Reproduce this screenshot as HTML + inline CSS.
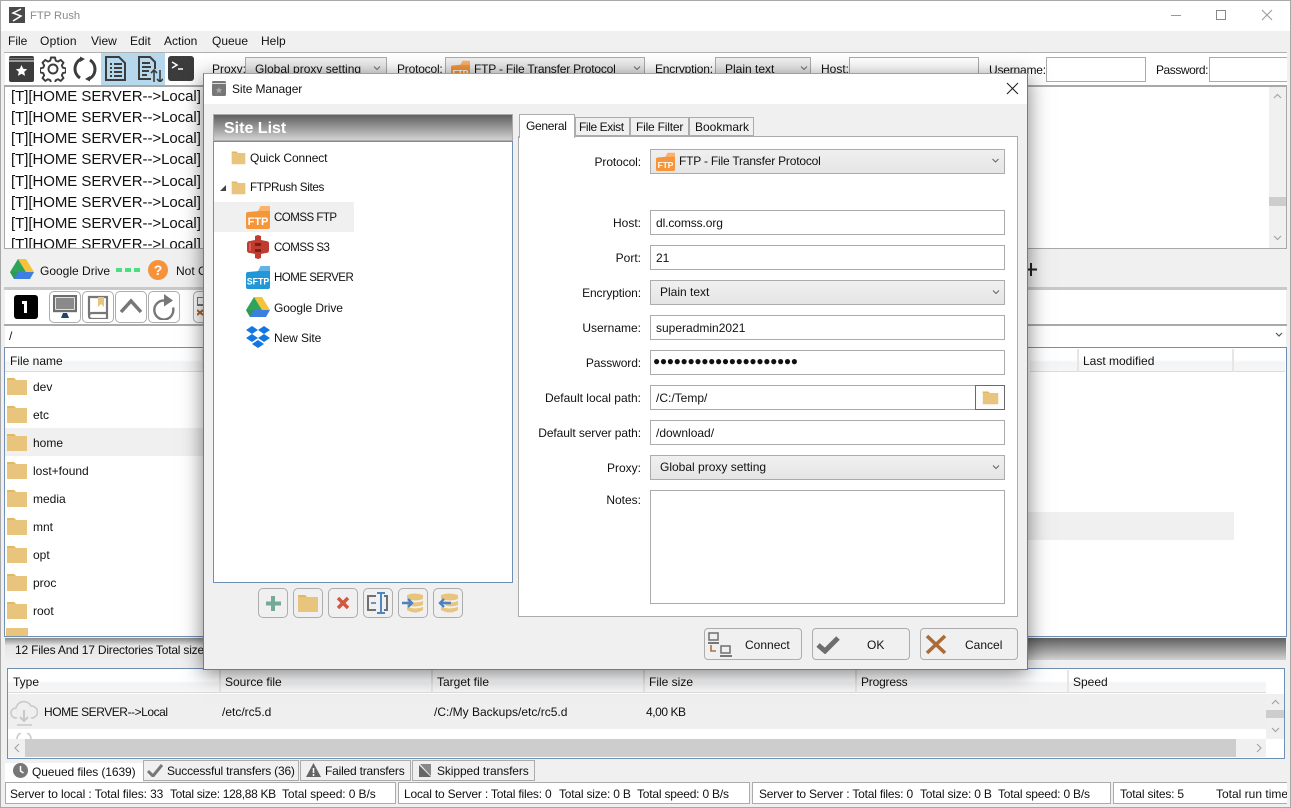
<!DOCTYPE html>
<html><head><meta charset="utf-8"><title>FTP Rush</title>
<style>
html,body{margin:0;padding:0;background:#fff}
#w{position:relative;width:1291px;height:808px;overflow:hidden;background:#f0f0f0;font:12px/16px "Liberation Sans",sans-serif;color:#111}
#w div,#w span.t,#w svg{position:absolute}
.t{white-space:nowrap}
.c0{letter-spacing:-.1px}.c1{letter-spacing:-.2px}.c2{letter-spacing:-.45px}.c3{letter-spacing:-.5px;font-size:11.5px}
.b{box-sizing:border-box;border:1px solid #ababab;background:#fff}
.r{text-align:right;width:140px;left:501px}
.dd{box-sizing:border-box;border:1px solid #acacac;background:linear-gradient(#f0f0f0,#e5e5e5)}
.ib{box-sizing:border-box;border:1px solid #adadad;border-radius:5px;width:30px;height:30px}
.btn{box-sizing:border-box;border:1px solid #adadad;border-radius:4px;width:98px;height:32px;top:628px;background:#f0f0f0}
.tab{box-sizing:border-box;border:1px solid #acacac;background:#f0f0f0;height:19px;top:117px}
.log{left:11px;font-size:15px;letter-spacing:-.05px;line-height:21px}
.hs{height:23px;background:linear-gradient(#fff 50%,#f2f4f6 60%,#f5f6f8);border-right:2px solid #e6e6e6;border-bottom:1px solid #dcdcdc;box-sizing:border-box}
</style></head><body>
<div id="w">
<svg width="0" height="0" style="left:0;top:0">
<defs>
<symbol id="folder" viewBox="0 0 22 20"><path d="M1 2h7l2 2h11v15H1z" fill="#e8c47c"/><path d="M1 2h7l2 2H1z" fill="#e0b860"/></symbol>
<symbol id="ftp" viewBox="0 0 24 24"><path d="M12 6l2-4a1 1 0 0 1 1-1h9v8H12z" fill="#fbb26b"/><path d="M0 9a2 2 0 0 1 2-2l11-1h11v16a2 2 0 0 1-2 2H2a2 2 0 0 1-2-2z" fill="#f6963a"/></symbol>
<symbol id="gd" viewBox="0 0 24 22"><path d="M8 1h8l8 13h-8z" fill="#f5c33b"/><path d="M8 1l8 13-4 7-0 0L0 14z" fill="#2fa35a"/><path d="M0 14h24l-4 7H4z" fill="#3d7fe0"/><path d="M8 14L4 21 0 14z" fill="#2b9a55"/></symbol>
</defs>
</svg>

<!-- window frame / title -->
<div style="left:0;top:0;width:1291px;height:31px;background:#fff"></div>
<div style="left:0;top:0;width:1291px;height:1px;background:#a8a8a8"></div>
<div style="left:0;top:0;width:1px;height:808px;background:#a8a8a8"></div>
<div style="left:1290px;top:0;width:1px;height:808px;background:#a8a8a8"></div>
<div style="left:0;top:807px;width:1291px;height:1px;background:#a8a8a8"></div>
<svg style="left:9px;top:7px" width="16" height="16" viewBox="0 0 16 16"><rect width="16" height="16" fill="#4a4a4a"/><path d="M12 2L4 6l8 3-8 5" fill="none" stroke="#fff" stroke-width="1.500"/></svg>
<span class="t" style="left:30px;top:8px;color:#8a8a8a;font-size:11.2px">FTP Rush</span>
<svg style="left:1170px;top:8px" width="110" height="15" viewBox="0 0 110 15"><path d="M1 7.500h10" stroke="#999" fill="none"/><rect x="46.500" y="2.500" width="9" height="9" fill="none" stroke="#888"/><path d="M92 2l10 10M102 2L92 12" stroke="#999" fill="none"/></svg>

<!-- menu -->
<span class="t" style="left:8px;top:33px">File</span>
<span class="t" style="left:40px;top:33px;letter-spacing:.25px">Option</span>
<span class="t" style="left:91px;top:33px">View</span>
<span class="t" style="left:130px;top:33px">Edit</span>
<span class="t" style="left:164px;top:33px">Action</span>
<span class="t" style="left:212px;top:33px">Queue</span>
<span class="t" style="left:261px;top:33px">Help</span>

<!-- toolbar -->
<div style="left:4px;top:52px;width:1283px;height:1px;background:#b0b0b0"></div>
<div style="left:5px;top:53px;width:1282px;height:33px;background:#fff"></div>
<div style="left:101px;top:53px;width:64px;height:32px;background:#b5d8ec"></div>
<svg style="left:9px;top:56px" width="25" height="26" viewBox="0 0 25 26"><path d="M2 0h21a2 2 0 0 1 2 2v22a2 2 0 0 1-2 2H2a2 2 0 0 1-2-2V2a2 2 0 0 1 2-2z" fill="#3c3c3c"/><path d="M0 5h25" stroke="#fff"/><path d="M0 2.500h25" stroke="#777"/><path d="M12.500 9l1.700 3.800 4 .4-3 2.700.9 4-3.600-2.100-3.600 2.100.9-4-3-2.700 4-.4z" fill="#fff"/></svg>
<svg style="left:40px;top:56px" width="26" height="26" viewBox="0 0 26 26"><g fill="none" stroke="#3c3c3c" stroke-width="1.900" stroke-linejoin="round"><path d="M11 1.500h4l.7 3.100 2.300 1 2.700-1.700 2.800 2.800-1.700 2.700 1 2.300 3.100.7v4l-3.100.7-1 2.300 1.700 2.700-2.800 2.800-2.700-1.700-2.300 1-.7 3.100h-4l-.7-3.100-2.300-1-2.700 1.700-2.800-2.800 1.700-2.700-1-2.300-3.100-.7v-4l3.100-.7 1-2.300-1.700-2.700 2.800-2.800 2.700 1.700 2.300-1z"/><circle cx="13" cy="13" r="4.500"/></g></svg>
<svg style="left:72px;top:56px" width="26" height="26" viewBox="0 0 26 26"><g fill="none" stroke="#3c3c3c" stroke-width="3"><path d="M8 22A11 11 0 0 1 9 3"/><path d="M18 4a11 11 0 0 1-1 19"/></g><path d="M8 0.500l5 2.500-5 3zM18 25.500l-5-2.500 5-3z" fill="#3c3c3c"/></svg>
<svg style="left:105px;top:56px" width="21" height="25" viewBox="0 0 21 25"><path d="M1 1h13l6 6v17H1z" fill="none" stroke="#3c3c3c" stroke-width="2"/><path d="M5 8h2M9 8h8M5 12h2M9 12h8M5 16h2M9 16h8M5 20h2M9 20h8" stroke="#3c3c3c" stroke-width="2"/></svg>
<svg style="left:137px;top:56px" width="26" height="26" viewBox="0 0 26 26"><path d="M14 23H2V1h11l5 5v7" fill="none" stroke="#3c3c3c" stroke-width="2"/><path d="M5 7h8M5 11h9M5 15h7M5 19h5" stroke="#3c3c3c" stroke-width="2"/><path d="M17 26V14m-3 3l3-3 3 3M23 14v12m-3-3l3 3 3-3" fill="none" stroke="#3c3c3c" stroke-width="1.600"/></svg>
<svg style="left:168px;top:56px" width="26" height="25" viewBox="0 0 26 25"><rect width="26" height="25" rx="3" fill="#3c3c3c"/><path d="M4 6l5 3-5 3" fill="none" stroke="#fff" stroke-width="1.500"/><path d="M10 13h5" stroke="#fff" stroke-width="1.500"/></svg>
<span class="t" style="left:212px;top:61px">Proxy:</span>
<div class="dd" style="left:245px;top:57px;width:142px;height:24px"></div>
<span class="t" style="left:255px;top:61px">Global proxy setting</span>
<span class="t c1" style="left:397px;top:61px">Protocol:</span>
<div class="dd" style="left:445px;top:57px;width:200px;height:24px"></div>
<svg style="left:451px;top:60px" width="19" height="19" viewBox="0 0 24 24"><use href="#ftp"/><text x="12" y="20" font-family="Liberation Sans" font-size="10.500" font-weight="bold" fill="#fff" text-anchor="middle">FTP</text></svg>
<span class="t c1" style="left:474px;top:61px">FTP - File Transfer Protocol</span>
<span class="t c1" style="left:655px;top:61px">Encryption:</span>
<div class="dd" style="left:715px;top:57px;width:96px;height:24px"></div>
<span class="t" style="left:725px;top:61px">Plain text</span>
<span class="t" style="left:821px;top:61px">Host:</span>
<div class="b" style="left:849px;top:57px;width:130px;height:25px"></div>
<span class="t c1" style="left:989px;top:62px">Username:</span>
<div class="b" style="left:1046px;top:57px;width:100px;height:25px"></div>
<span class="t c2" style="left:1156px;top:62px">Password:</span>
<div class="b" style="left:1209px;top:57px;width:78px;height:25px;border-right:0"></div>

<!-- log -->
<div style="left:4px;top:85px;width:1283px;height:164px;box-sizing:border-box;border:1px solid #a8a8a8;border-top:2px solid #a8a8a8;background:#fff"></div>
<div style="left:1269px;top:87px;width:17px;height:161px;background:#f0f0f0"></div>
<div style="left:1269px;top:197px;width:17px;height:9px;background:#cdcdcd"></div>
<svg style="left:1269px;top:87px" width="17" height="161"><path d="M5 11l3.500-3.500L12 11M5 149l3.500 3.500L12 149" fill="none" stroke="#a6a6a6" stroke-width="1.200"/></svg>
<span class="t log" style="top:86px">[T][HOME SERVER--&gt;Local]</span>
<span class="t log" style="top:107px">[T][HOME SERVER--&gt;Local]</span>
<span class="t log" style="top:128px">[T][HOME SERVER--&gt;Local]</span>
<span class="t log" style="top:149px">[T][HOME SERVER--&gt;Local]</span>
<span class="t log" style="top:171px">[T][HOME SERVER--&gt;Local]</span>
<span class="t log" style="top:192px">[T][HOME SERVER--&gt;Local]</span>
<span class="t log" style="top:213px">[T][HOME SERVER--&gt;Local]</span>
<div style="left:5px;top:234px;width:198px;height:14px;overflow:hidden"><span class="t" style="position:absolute;left:6px;top:0;font-size:15px;letter-spacing:-.05px;line-height:21px">[T][HOME SERVER--&gt;Local]</span></div>

<!-- connection strip -->
<svg style="left:10px;top:258px" width="24" height="22"><use href="#gd"/></svg>
<span class="t" style="left:40px;top:263px">Google Drive</span>
<div style="left:116px;top:268px;width:6px;height:4px;background:#4be07f"></div>
<div style="left:125px;top:268px;width:6px;height:4px;background:#4be07f"></div>
<div style="left:134px;top:268px;width:6px;height:4px;background:#4be07f"></div>
<svg style="left:148px;top:260px" width="20" height="20"><circle cx="10" cy="10" r="10" fill="#f7923a"/><text x="10" y="15" font-family="Liberation Sans" font-size="14" font-weight="bold" fill="#fff" text-anchor="middle">?</text></svg>
<span class="t" style="left:176px;top:263px">Not Connected</span>
<svg style="left:1024px;top:262px" width="14" height="15"><path d="M7 1v13M1 7.500h12" stroke="#222" stroke-width="2"/></svg>

<!-- file panel -->
<div style="left:4px;top:287px;width:1283px;height:3px;background:#c9c9c9"></div>
<div style="left:5px;top:290px;width:1281px;height:34px;background:#fff"></div>
<svg style="left:14px;top:295px" width="24" height="24"><rect width="24" height="24" rx="3" fill="#000"/><path d="M8 6h5v12h-3V9H8z" fill="#fff"/></svg>
<div class="ib" style="left:49px;top:291px;width:32px;height:32px"></div>
<svg style="left:53px;top:295px" width="24" height="24" viewBox="0 0 24 24"><rect x="1" y="1" width="22" height="15" fill="none" stroke="#6e6e6e" stroke-width="2.400"/><rect x="3" y="3" width="18" height="11" fill="#8a8a8a"/><path d="M8 23l2-5h4l2 5z" fill="#23436f"/></svg>
<div class="ib" style="left:82px;top:291px;width:32px;height:32px"></div>
<svg style="left:87px;top:295px" width="22" height="24" viewBox="0 0 22 24"><path d="M2 20V2h18v22H5a3 3 0 0 1-3-3 3 3 0 0 1 3-3h15" fill="none" stroke="#777" stroke-width="2.200"/><path d="M11 2h6v10l-3-3-3 3z" fill="#e8c47c"/></svg>
<div class="ib" style="left:115px;top:291px;width:32px;height:32px"></div>
<svg style="left:119px;top:298px" width="24" height="16"><path d="M2 14L12 3l10 11" fill="none" stroke="#777" stroke-width="3.500"/></svg>
<div class="ib" style="left:148px;top:291px;width:32px;height:32px"></div>
<svg style="left:153px;top:294px" width="23" height="26" viewBox="0 0 23 26"><path d="M11 6.500a9.500 9.500 0 1 0 9 7" fill="none" stroke="#777" stroke-width="2.400"/><path d="M11 0l9 6.500-9 6z" fill="#777"/></svg>
<div class="ib" style="left:193px;top:291px;width:32px;height:32px"></div>
<svg style="left:197px;top:297px" width="8" height="20"><rect x="0" y="0" width="8" height="8" fill="none" stroke="#777" stroke-width="2"/><path d="M0 13l6 5M6 13l-6 5" stroke="#a8642c" stroke-width="2"/></svg>
<div style="left:4px;top:324px;width:1283px;height:2px;background:#aaa"></div>
<div style="left:5px;top:326px;width:1281px;height:21px;background:#fff"></div>
<span class="t" style="left:9px;top:328px">/</span>
<svg style="left:1273px;top:330px" width="12" height="10"><path d="M3 3l3 3 3-3" fill="none" stroke="#555" stroke-width="1.200"/></svg>
<div class="b" style="left:4px;top:347px;width:1283px;height:290px;border-color:#6f8fb5"></div>
<div class="hs" style="left:5px;top:349px;width:199px"></div>
<div class="hs" style="left:1030px;top:349px;width:49px"></div>
<div class="hs" style="left:1079px;top:349px;width:155px"></div>
<div class="hs" style="left:1234px;top:349px;width:51px;border-right:0"></div>
<span class="t" style="left:10px;top:353px">File name</span>
<span class="t" style="left:1083px;top:353px">Last modified</span>
<div style="left:5px;top:428px;width:198px;height:28px;background:#f0f0f0"></div>
<div style="left:1028px;top:512px;width:206px;height:28px;background:#f0f0f0"></div>
<svg style="left:6px;top:376px" width="22" height="20"><use href="#folder"/></svg><span class="t" style="left:33px;top:379px">dev</span>
<svg style="left:6px;top:404px" width="22" height="20"><use href="#folder"/></svg><span class="t" style="left:33px;top:407px">etc</span>
<svg style="left:6px;top:432px" width="22" height="20"><use href="#folder"/></svg><span class="t" style="left:33px;top:435px">home</span>
<svg style="left:6px;top:460px" width="22" height="20"><use href="#folder"/></svg><span class="t" style="left:33px;top:463px">lost+found</span>
<svg style="left:6px;top:488px" width="22" height="20"><use href="#folder"/></svg><span class="t" style="left:33px;top:491px">media</span>
<svg style="left:6px;top:516px" width="22" height="20"><use href="#folder"/></svg><span class="t" style="left:33px;top:519px">mnt</span>
<svg style="left:6px;top:544px" width="22" height="20"><use href="#folder"/></svg><span class="t" style="left:33px;top:547px">opt</span>
<svg style="left:6px;top:572px" width="22" height="20"><use href="#folder"/></svg><span class="t" style="left:33px;top:575px">proc</span>
<svg style="left:6px;top:600px" width="22" height="20"><use href="#folder"/></svg><span class="t" style="left:33px;top:603px">root</span>
<div style="left:6px;top:628px;width:22px;height:8px;background:#e8c47c"></div>
<div style="left:5px;top:638px;width:1281px;height:22px;background:linear-gradient(#5f5f5f,#d2d2d2)"></div>
<div style="left:5px;top:638px;width:199px;height:22px;background:linear-gradient(#8a8a8a,#e6e6e6 35%,#eee)"></div>
<span class="t c1" style="left:15px;top:642px">12 Files And 17 Directories Total size</span>

<!-- queue -->
<div class="b" style="left:7px;top:668px;width:1278px;height:91px;border-color:#6f8fb5"></div>
<div class="hs" style="left:8px;top:670px;width:213px"></div>
<div class="hs" style="left:221px;top:670px;width:212px"></div>
<div class="hs" style="left:433px;top:670px;width:212px"></div>
<div class="hs" style="left:645px;top:670px;width:212px"></div>
<div class="hs" style="left:857px;top:670px;width:212px"></div>
<div class="hs" style="left:1069px;top:670px;width:197px;border-right:0"></div>
<span class="t" style="left:13px;top:674px">Type</span>
<span class="t" style="left:225px;top:674px">Source file</span>
<span class="t" style="left:437px;top:674px">Target file</span>
<span class="t" style="left:649px;top:674px">File size</span>
<span class="t c1" style="left:861px;top:674px">Progress</span>
<span class="t" style="left:1073px;top:674px">Speed</span>
<div style="left:8px;top:694px;width:1258px;height:35px;background:#efefef"></div>
<svg style="left:10px;top:697px" width="28" height="31" viewBox="0 0 28 31"><path d="M7 21H6a5 5 0 0 1 0-10 8 8 0 0 1 15-2 6 6 0 0 1 1 12h-1" fill="none" stroke="#c8c8c8" stroke-width="1.500"/><path d="M14 13v11m-4-4l4 4 4-4" fill="none" stroke="#c8c8c8" stroke-width="2"/><path d="M7 28h15" stroke="#c8c8c8" stroke-width="1.500"/></svg>
<span class="t c2" style="left:44px;top:704px">HOME SERVER--&gt;Local</span>
<span class="t" style="left:222px;top:704px">/etc/rc5.d</span>
<span class="t" style="left:434px;top:704px">/C:/My Backups/etc/rc5.d</span>
<span class="t c2" style="left:646px;top:704px">4,00 KB</span>
<svg style="left:14px;top:733px" width="20" height="6"><path d="M3 6a7 7 0 0 1 14 0" fill="none" stroke="#c8c8c8" stroke-width="1.500"/></svg>
<div style="left:8px;top:739px;width:1258px;height:18px;background:#f0f0f0"></div>
<div style="left:25px;top:739px;width:1211px;height:18px;background:#cdcdcd"></div>
<svg style="left:8px;top:739px" width="1258" height="18"><path d="M11 5L7 9l4 4M1249 5l4 4-4 4" fill="none" stroke="#a6a6a6" stroke-width="1.200"/></svg>
<div style="left:1266px;top:694px;width:18px;height:45px;background:#f0f0f0"></div>
<div style="left:1266px;top:710px;width:18px;height:8px;background:#cdcdcd"></div>
<svg style="left:1266px;top:694px" width="18" height="45"><path d="M6 10l3.500-3.500L13 10M6 34l3.500 3.500L13 34" fill="none" stroke="#a6a6a6" stroke-width="1.200"/></svg>

<!-- tabs -->
<div style="left:5px;top:763px;width:138px;height:21px;background:#fff"></div>
<svg style="left:13px;top:763px" width="15" height="15"><circle cx="7.500" cy="7.500" r="7.500" fill="#777"/><path d="M7.500 3v5l3 2" fill="none" stroke="#fff" stroke-width="1.500"/></svg>
<span class="t c0" style="left:32px;top:764px">Queued files (1639)</span>
<div class="b" style="left:143px;top:760px;width:156px;height:21px;background:#f0f0f0"></div>
<svg style="left:147px;top:764px" width="16" height="13"><path d="M1 7l5 5 9-11" fill="none" stroke="#777" stroke-width="3"/></svg>
<span class="t c1" style="left:167px;top:763px">Successful transfers (36)</span>
<div class="b" style="left:300px;top:760px;width:111px;height:21px;background:#f0f0f0"></div>
<svg style="left:306px;top:763px" width="15" height="14"><path d="M7.500 0L15 14H0z" fill="#666"/><path d="M7.500 5v5M7.500 11v2" stroke="#fff" stroke-width="1.500"/></svg>
<span class="t c1" style="left:325px;top:763px">Failed transfers</span>
<div class="b" style="left:412px;top:760px;width:123px;height:21px;background:#f0f0f0"></div>
<svg style="left:419px;top:764px" width="13" height="13"><path d="M1 0h11v12z" fill="#888"/><path d="M0 1l12 12H0z" fill="#666"/></svg>
<span class="t c0" style="left:437px;top:763px">Skipped transfers</span>

<!-- status -->
<div class="b" style="left:5px;top:782px;width:391px;height:22px"></div>
<div class="b" style="left:398px;top:782px;width:352px;height:22px"></div>
<div class="b" style="left:752px;top:782px;width:359px;height:22px"></div>
<div class="b" style="left:1113px;top:782px;width:174px;height:22px;border-right:0"></div>
<span class="t c0" style="left:10px;top:786px">Server to local : Total files: 33</span><span class="t" style="left:170px;top:786px;letter-spacing:-.33px">Total size: 128,88 KB</span><span class="t c0" style="left:282px;top:786px">Total speed: 0 B/s</span>
<span class="t c1" style="left:404px;top:786px">Local to Server : Total files: 0</span><span class="t c1" style="left:559px;top:786px">Total size: 0 B</span><span class="t c1" style="left:637px;top:786px">Total speed: 0 B/s</span>
<span class="t c1" style="left:759px;top:786px">Server to Server : Total files: 0</span><span class="t c1" style="left:920px;top:786px">Total size: 0 B</span><span class="t c1" style="left:998px;top:786px">Total speed: 0 B/s</span>
<span class="t c1" style="left:1120px;top:786px">Total sites: 5</span>
<div style="left:1216px;top:786px;width:71px;height:16px;overflow:hidden"><span class="t" style="position:absolute;left:0;top:0">Total run time</span></div>

<!-- dialog -->
<div style="left:203px;top:73px;width:825px;height:597px;background:#f0f0f0;box-sizing:border-box;border:1px solid #7a7a7a;border-top-color:#a0a0a0;box-shadow:0 4px 20px rgba(0,0,0,.5)"></div>
<div style="left:204px;top:74px;width:823px;height:30px;background:#fff"></div>
<svg style="left:212px;top:81px" width="14" height="15" viewBox="0 0 14 15"><rect width="14" height="15" rx="1.500" fill="#777"/><path d="M0 2.500h14" stroke="#ddd"/><path d="M7 6l1 2.200 2.300.2-1.800 1.500.6 2.300L7 11l-2.100 1.200.6-2.300L3.700 8.400 6 8.200z" fill="#aaa"/></svg>
<span class="t c0" style="left:232px;top:81px">Site Manager</span>
<svg style="left:1006px;top:82px" width="13" height="13"><path d="M1 1l11 11M12 1L1 12" stroke="#222" stroke-width="1.100" fill="none"/></svg>

<!-- site list -->
<div style="left:213px;top:114px;width:300px;height:27px;box-sizing:border-box;border:1px solid #aaa;background:linear-gradient(#5f5f5f,#d2d2d2)"></div>
<span class="t" style="left:224px;top:120px;font-size:16px;line-height:18px;font-weight:bold;color:#fff">Site List</span>
<div class="b" style="left:213px;top:141px;width:300px;height:442px;border-color:#6f8fb5"></div>
<svg style="left:231px;top:150px" width="15" height="15" viewBox="0 0 22 20" preserveAspectRatio="none"><use href="#folder"/></svg>
<span class="t c0" style="left:250px;top:150px">Quick Connect</span>
<svg style="left:219px;top:184px" width="8" height="8"><path d="M7 1v6H1z" fill="#444"/></svg>
<svg style="left:231px;top:180px" width="15" height="15" viewBox="0 0 22 20" preserveAspectRatio="none"><use href="#folder"/></svg>
<span class="t" style="left:250px;top:180px;letter-spacing:-.35px;font-size:11.7px">FTPRush Sites</span>
<div style="left:214px;top:202px;width:140px;height:30px;background:#f0f0f0"></div>
<svg style="left:246px;top:205px" width="24" height="24"><use href="#ftp"/><text x="12" y="20" font-family="Liberation Sans" font-size="11" font-weight="bold" fill="#fff" text-anchor="middle">FTP</text></svg>
<span class="t c3" style="left:274px;top:210px">COMSS FTP</span>
<svg style="left:247px;top:235px" width="22" height="24" viewBox="0 0 22 24"><path d="M8 1l3-1 3 1v4l5 1a3 3 0 0 1 3 2v8a3 3 0 0 1-3 2l-5 1v4l-3 1-3-1v-4l-5-1a3 3 0 0 1-3-2V8a3 3 0 0 1 3-2l5-1z" fill="#bf3d30"/><path d="M8 8h6v3H8zM8 14h6v3H8z" fill="#7a1f16"/><path d="M3 8v8" stroke="#e26a5c" stroke-width="1.500"/></svg>
<span class="t c3" style="left:274px;top:240px">COMSS S3</span>
<svg style="left:246px;top:265px" width="24" height="24" viewBox="0 0 24 24"><path d="M12 6l2-4a1 1 0 0 1 1-1h9v8H12z" fill="#63b4e6"/><path d="M0 9a2 2 0 0 1 2-2l11-1h11v16a2 2 0 0 1-2 2H2a2 2 0 0 1-2-2z" fill="#2196d8"/><text x="12" y="19.500" font-family="Liberation Sans" font-size="8.800" font-weight="bold" fill="#fff" text-anchor="middle">SFTP</text></svg>
<span class="t c3" style="left:274px;top:270px">HOME SERVER</span>
<svg style="left:246px;top:296px" width="24" height="22"><use href="#gd"/></svg>
<span class="t c0" style="left:274px;top:300px">Google Drive</span>
<svg style="left:246px;top:326px" width="24" height="23" viewBox="0 0 24 23"><path d="M6 0l6 4-6 4-6-4zM18 0l6 4-6 4-6-4zM6 8l6 4-6 4-6-4zM18 8l6 4-6 4-6-4zM12 14l6 4-6 4-6-4z" fill="#1277e0"/></svg>
<span class="t c0" style="left:274px;top:330px">New Site</span>

<!-- list buttons -->
<div class="ib" style="left:258px;top:588px"></div>
<svg style="left:263px;top:593px" width="20" height="20"><path d="M10 3v15M3 10.500h15" stroke="#75a99a" stroke-width="4"/></svg>
<div class="ib" style="left:293px;top:588px"></div>
<svg style="left:297px;top:593px" width="22" height="20"><use href="#folder"/></svg>
<div class="ib" style="left:328px;top:588px"></div>
<svg style="left:335px;top:595px" width="16" height="16"><path d="M3 3l10 10M13 3L3 13" stroke="#d2593d" stroke-width="3.500"/></svg>
<div class="ib" style="left:363px;top:588px"></div>
<svg style="left:366px;top:591px" width="24" height="24" viewBox="0 0 24 24"><path d="M10 5H2v14h8M18 5h3v14h-3" fill="none" stroke="#707070" stroke-width="2"/><path d="M5 12h5" stroke="#6d93c0" stroke-width="2"/><path d="M11 2h8M15 2v20M11 22h8" stroke="#4d86c4" stroke-width="2"/></svg>
<div class="ib" style="left:398px;top:588px"></div>
<svg style="left:402px;top:592px" width="23" height="22" viewBox="0 0 23 22"><path d="M5 3q7-3 16 0v4q-8 3-16 0zM5 9q8 3 16 0v4q-8 3-16 0zM5 15q8 3 16 0v3q-8 5-16 0z" fill="#e8c47c"/><path d="M0 11h9m-3-4l4 4-4 4" fill="none" stroke="#4b83c0" stroke-width="2.400"/></svg>
<div class="ib" style="left:433px;top:588px"></div>
<svg style="left:437px;top:592px" width="23" height="22" viewBox="0 0 23 22"><path d="M4 3q8-3 17 0v4q-8 3-17 0zM8 9q7 3 13 0v4q-7 3-13 0zM4 15q8 3 17 0v3q-8 5-17 0z" fill="#e8c47c"/><path d="M14 11H3m4-4l-4 4 4 4" fill="none" stroke="#4b83c0" stroke-width="2.400"/></svg>

<!-- tabs -->
<div class="b" style="left:518px;top:136px;width:500px;height:481px"></div>
<div class="tab" style="left:575px;width:55px"></div>
<div class="tab" style="left:630px;width:59px"></div>
<div class="tab" style="left:689px;width:65px"></div>
<div style="left:519px;top:114px;width:56px;height:24px;box-sizing:border-box;border:1px solid #acacac;border-bottom:0;background:#fff"></div>
<span class="t" style="left:526px;top:118px;letter-spacing:-.3px">General</span>
<span class="t" style="left:579px;top:119px;letter-spacing:-.4px">File Exist</span>
<span class="t c1" style="left:636px;top:119px">File Filter</span>
<span class="t" style="left:695px;top:119px">Bookmark</span>

<!-- form -->
<span class="t r c0" style="top:154px">Protocol:</span>
<div class="dd" style="left:650px;top:149px;width:355px;height:25px"></div>
<svg style="left:656px;top:152px" width="19" height="19" viewBox="0 0 24 24"><use href="#ftp"/><text x="12" y="20" font-family="Liberation Sans" font-size="10.500" font-weight="bold" fill="#fff" text-anchor="middle">FTP</text></svg>
<span class="t c1" style="left:679px;top:153px">FTP - File Transfer Protocol</span>
<span class="t r" style="top:215px">Host:</span>
<div class="b" style="left:650px;top:210px;width:355px;height:25px"></div>
<span class="t c0" style="left:656px;top:215px">dl.comss.org</span>
<span class="t r" style="top:250px">Port:</span>
<div class="b" style="left:650px;top:245px;width:355px;height:25px"></div>
<span class="t" style="left:656px;top:250px">21</span>
<span class="t r c0" style="top:285px">Encryption:</span>
<div class="dd" style="left:650px;top:280px;width:355px;height:25px"></div>
<span class="t" style="left:660px;top:284px">Plain text</span>
<span class="t r" style="top:320px">Username:</span>
<div class="b" style="left:650px;top:315px;width:355px;height:25px"></div>
<span class="t" style="left:656px;top:320px">superadmin2021</span>
<span class="t r c0" style="top:355px">Password:</span>
<div class="b" style="left:650px;top:350px;width:355px;height:25px"></div>
<span class="t" id="pw" style="left:653px;top:353px;font-size:12px;letter-spacing:-.36px;font-weight:bold">&#9679;&#9679;&#9679;&#9679;&#9679;&#9679;&#9679;&#9679;&#9679;&#9679;&#9679;&#9679;&#9679;&#9679;&#9679;&#9679;&#9679;&#9679;&#9679;&#9679;&#9679;</span>
<span class="t r" style="top:390px">Default local path:</span>
<div class="b" style="left:650px;top:385px;width:326px;height:25px"></div>
<span class="t" style="left:656px;top:390px">/C:/Temp/</span>
<div style="left:975px;top:385px;width:30px;height:25px;box-sizing:border-box;border:1px solid #6a6a6a;background:#fdfdfd"></div>
<svg style="left:982px;top:390px" width="17" height="15" viewBox="0 0 22 20" preserveAspectRatio="none"><use href="#folder"/></svg>
<span class="t r c0" style="top:425px">Default server path:</span>
<div class="b" style="left:650px;top:420px;width:355px;height:25px"></div>
<span class="t" style="left:656px;top:425px">/download/</span>
<span class="t r" style="top:460px">Proxy:</span>
<div class="dd" style="left:650px;top:455px;width:355px;height:25px"></div>
<span class="t" style="left:660px;top:459px">Global proxy setting</span>
<span class="t r" style="top:492px">Notes:</span>
<div class="b" style="left:650px;top:490px;width:355px;height:114px"></div>
<svg style="left:0;top:0" width="1291" height="808"><g fill="none" stroke="#666" stroke-width="1.100"><path d="M374 66.500l3 3 3-3M634 66.500l3 3 3-3M801 66.500l3 3 3-3M992.500 159l3 3 3-3M993 290.500l3 3 3-3M993 465.500l3 3 3-3"/></g></svg>

<!-- action buttons -->
<div class="btn" style="left:704px"></div>
<svg style="left:708px;top:632px" width="24" height="25" viewBox="0 0 24 25"><rect x="1" y="1" width="9" height="7" fill="none" stroke="#777" stroke-width="1.600"/><path d="M0 11h11" stroke="#777" stroke-width="2"/><path d="M3 13v6h5" fill="none" stroke="#b0713a" stroke-width="1.600"/><rect x="13" y="14" width="9" height="7" fill="none" stroke="#777" stroke-width="1.600"/><path d="M12 24h12" stroke="#777" stroke-width="2"/></svg>
<span class="t" style="left:745px;top:637px">Connect</span>
<div class="btn" style="left:812px"></div>
<svg style="left:816px;top:635px" width="24" height="19"><path d="M2 10l7 6L22 3" fill="none" stroke="#6e6e6e" stroke-width="5"/></svg>
<span class="t" style="left:867px;top:637px">OK</span>
<div class="btn" style="left:920px"></div>
<svg style="left:925px;top:634px" width="22" height="21"><path d="M2 2l18 17M20 2L2 19" stroke="#ab6c37" stroke-width="3.600"/></svg>
<span class="t" style="left:965px;top:637px">Cancel</span>
</div>
</body></html>
